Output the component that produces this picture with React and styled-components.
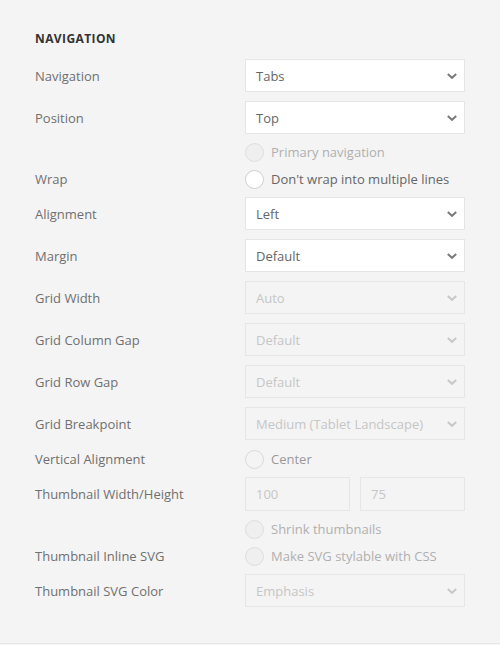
import React from "react";
import styled, { createGlobalStyle } from "styled-components";

const GlobalStyle = createGlobalStyle`
  html, body {
    margin: 0;
    padding: 0;
    background: #f4f4f4;
  }
  body {
    font-family: "Open Sans", "Liberation Sans", sans-serif;
  }
`;

const Panel = styled.div`
  width: 500px;
  height: 644px;
  box-sizing: border-box;
  padding: 31px 35px 0;
  background: #f4f4f4;
  border-bottom: 1px solid #e8e8e8;
`;

const Heading = styled.h3`
  margin: 0 0 12px;
  font-size: 12px;
  line-height: 16px;
  font-weight: 700;
  letter-spacing: 0.4px;
  text-transform: uppercase;
  color: #333;
`;

const Rows = styled.div`
  display: flex;
  flex-direction: column;
  gap: 9px;
`;

const Row = styled.div`
  display: grid;
  grid-template-columns: 210px 220px;
  align-items: center;
  margin-top: ${(p) => p.$shift || 0}px;
`;

const Label = styled.div`
  font-size: 13px;
  line-height: 18px;
  color: #707070;
`;

const SelectBox = styled.div`
  height: 33px;
  box-sizing: border-box;
  display: flex;
  align-items: center;
  justify-content: space-between;
  padding: 0 6px 0 10px;
  border: 1px solid ${(p) => (p.$disabled ? "#e6e6e6" : "#e5e5e5")};
  background: ${(p) => (p.$disabled ? "#f4f4f4" : "#fff")};
  color: ${(p) => (p.$disabled ? "#c6c6c6" : "#666")};
  font-size: 13px;
`;

const Chevron = styled.svg`
  width: 12px;
  height: 8px;
  display: block;
`;

const InputPair = styled.div`
  display: grid;
  grid-template-columns: 1fr 1fr;
  gap: 10px;
`;

const TextInput = styled.div`
  height: 34px;
  box-sizing: border-box;
  display: flex;
  align-items: center;
  padding: 0 10px;
  border: 1px solid #e6e6e6;
  background: #f4f4f4;
  color: #c6c6c6;
  font-size: 13px;
`;

const RadioLine = styled.div`
  height: 18px;
  display: flex;
  align-items: center;
  gap: 7px;
  font-size: 13px;
  white-space: nowrap;
  color: ${(p) => p.$color};
`;

const Circle = styled.span`
  flex: none;
  width: 19px;
  height: 19px;
  box-sizing: border-box;
  border-radius: 50%;
  border: 1px solid ${(p) => p.$border};
  background: ${(p) => p.$fill};
`;

const radioTones = {
  on: { color: "#666", border: "#cfcfcf", fill: "#fff" },
  muted: { color: "#999", border: "#dadada", fill: "#f4f4f4" },
  off: { color: "#b0b0b0", border: "#dedede", fill: "#efefef" },
};

function Select({ value, disabled }) {
  return (
    <SelectBox $disabled={disabled}>
      <span>{value}</span>
      <Chevron viewBox="0 0 12 8">
        <path
          d="M1.8 2 6 5.8 10.2 2"
          fill="none"
          stroke={disabled ? "#c8c8c8" : "#7a7a7a"}
          strokeWidth="2"
        />
      </Chevron>
    </SelectBox>
  );
}

function Radio({ text, tone = "on" }) {
  const t = radioTones[tone];
  return (
    <RadioLine $color={t.color}>
      <Circle $border={t.border} $fill={t.fill} />
      {text}
    </RadioLine>
  );
}

const selects = [
  ["Alignment", "Left", false],
  ["Margin", "Default", false],
  ["Grid Width", "Auto", true],
  ["Grid Column Gap", "Default", true],
  ["Grid Row Gap", "Default", true],
  ["Grid Breakpoint", "Medium (Tablet Landscape)", true],
];

export default function App() {
  return (
    <>
      <GlobalStyle />
      <Panel>
        <Heading>Navigation</Heading>
        <Rows>
          <Row>
            <Label>Navigation</Label>
            <Select value="Tabs" />
          </Row>
          <Row>
            <Label>Position</Label>
            <Select value="Top" />
          </Row>
          <Row>
            <Label />
            <Radio text="Primary navigation" tone="off" />
          </Row>
          <Row>
            <Label>Wrap</Label>
            <Radio text="Don't wrap into multiple lines" />
          </Row>
          {selects.map(([label, value, disabled]) => (
            <Row key={label}>
              <Label>{label}</Label>
              <Select value={value} disabled={disabled} />
            </Row>
          ))}
          <Row $shift={1}>
            <Label>Vertical Alignment</Label>
            <Radio text="Center" tone="muted" />
          </Row>
          <Row>
            <Label>Thumbnail Width/Height</Label>
            <InputPair>
              <TextInput>100</TextInput>
              <TextInput>75</TextInput>
            </InputPair>
          </Row>
          <Row>
            <Label />
            <Radio text="Shrink thumbnails" tone="off" />
          </Row>
          <Row>
            <Label>Thumbnail Inline SVG</Label>
            <Radio text="Make SVG stylable with CSS" tone="off" />
          </Row>
          <Row>
            <Label>Thumbnail SVG Color</Label>
            <Select value="Emphasis" disabled />
          </Row>
        </Rows>
      </Panel>
    </>
  );
}
